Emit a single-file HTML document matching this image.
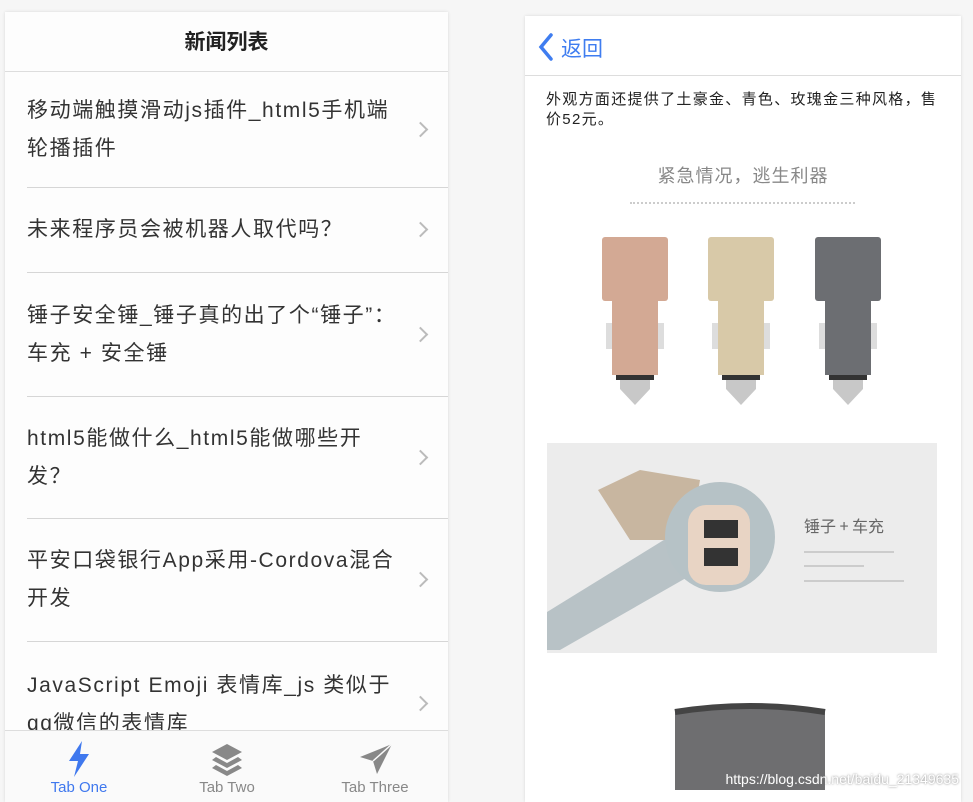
<!DOCTYPE html>
<html><head><meta charset="utf-8"><style>
*{margin:0;padding:0;box-sizing:border-box}
body{width:973px;height:802px;background:#f6f6f6;position:relative;overflow:hidden;font-family:"Liberation Sans","Noto Sans CJK SC",sans-serif}
.p{position:absolute;background:#fff;box-shadow:0 0 3px rgba(0,0,0,.12)}
#L{left:5px;top:12px;width:443px;height:790px;background:#fdfdfd}
#R{left:525px;top:16px;width:436px;height:786px}
.hd{height:60px;border-bottom:1px solid #ddd;text-align:center;font-size:21px;font-weight:bold;line-height:62px;color:#222}
.row{position:absolute;left:22px;right:0;border-bottom:1.5px solid #d6d6d6;font-size:21px;color:#333;line-height:38px;display:flex;align-items:center}
.row span{display:block;white-space:nowrap;letter-spacing:1.6px}
.ch{position:absolute;right:22px;top:50%;margin-top:-6px;width:11px;height:11px;border-right:2px solid #bbb;border-top:2px solid #bbb;transform:rotate(45deg)}
.tab{position:absolute;left:0;right:0;top:718px;height:72px;border-top:1px solid #ddd;background:#fafafa}
.t{position:absolute;top:48px;font-size:15px;color:#888;width:100px;text-align:center}
</style></head><body>
<div class="p" id="L">
<div class="hd">新闻列表</div>
<div style="position:absolute;left:0;right:0;top:61px;height:657px;overflow:hidden">
<div class="row" style="top:0;height:115px"><span>移动端触摸滑动js插件_html5手机端<br>轮播插件</span><i class="ch"></i></div>
<div class="row" style="top:115px;height:85px"><span>未来程序员会被机器人取代吗？</span><i class="ch"></i></div>
<div class="row" style="top:200px;height:124px"><span>锤子安全锤_锤子真的出了个“锤子”：<br>车充 + 安全锤</span><i class="ch"></i></div>
<div class="row" style="top:324px;height:122px"><span>html5能做什么_html5能做哪些开<br>发？</span><i class="ch"></i></div>
<div class="row" style="top:446px;height:123px"><span>平安口袋银行App采用-Cordova混合<br>开发</span><i class="ch"></i></div>
<div class="row" style="top:569px;height:123px;border:none;align-items:flex-start;padding-top:25px"><span>JavaScript Emoji 表情库_js 类似于<br>qq微信的表情库</span><i class="ch"></i></div>
</div>
<div class="tab">
<svg style="position:absolute;left:62px;top:10px" width="24" height="36" viewBox="0 0 24 36"><path d="M15 0 L2 20 H11 L7 36 L22 13 H13 Z" fill="#3f78ee"/></svg>
<svg style="position:absolute;left:205px;top:12px" width="34" height="34" viewBox="0 0 34 34"><path d="M17 1 L32 9 L17 17 L2 9Z" fill="#888"/><path d="M6 14 L17 20 L28 14 L32 17 L17 25 L2 17Z" fill="#888"/><path d="M6 22 L17 28 L28 22 L32 25 L17 33 L2 25Z" fill="#888"/></svg>
<svg style="position:absolute;left:354px;top:12px" width="34" height="32" viewBox="0 0 34 32"><path d="M33 1 L1 14 L14 18 L18 31 Z" fill="#888"/><path d="M33 1 L14 18" stroke="#fafafa" stroke-width="1.5"/></svg>
<div class="t" style="left:24px;color:#3f78ee">Tab One</div>
<div class="t" style="left:172px">Tab Two</div>
<div class="t" style="left:320px">Tab Three</div>
</div>
</div>
<div class="p" id="R">
<div style="height:60px;border-bottom:1px solid #ddd;position:relative">
<svg style="position:absolute;left:13px;top:17px" width="16" height="28" viewBox="0 0 16 28"><path d="M13 2 L3 14 L13 26" stroke="#3f7df0" stroke-width="3.5" fill="none" stroke-linecap="round"/></svg>
<div style="position:absolute;left:36px;top:17px;font-size:21px;color:#3f7df0">返回</div>
</div>
<div style="position:absolute;left:21px;top:74px;width:415px;font-size:15px;line-height:20px;color:#222;white-space:nowrap;letter-spacing:1.3px">外观方面还提供了土豪金、青色、玫瑰金三种风格，售<br>价52元。</div>
<div style="position:absolute;left:0;width:436px;top:146px;text-align:center;font-size:18px;color:#888;letter-spacing:1px">紧急情况，逃生利器</div>
<div style="position:absolute;left:105px;top:186px;width:225px;height:1px;border-top:2px dotted #ccc"></div>
<svg style="position:absolute;left:0;top:0" width="436" height="786" viewBox="525 16 436 786">
<defs>
<g id="c"><rect x="0" y="0" width="66" height="64" rx="3"/><path d="M10 64 H56 V138 H10Z"/><rect x="4" y="86" width="6" height="26" fill="#ddd"/><rect x="56" y="86" width="6" height="26" fill="#ddd"/><rect x="14" y="138" width="38" height="5" fill="#333"/><path d="M18 143 H48 V152 L33 168 L18 152Z" fill="#c8c8c8"/></g>
</defs>
<use href="#c" x="602" y="237" fill="#d3a994"/>
<use href="#c" x="708" y="237" fill="#d8c9a8"/>
<use href="#c" x="815" y="237" fill="#6c6e72"/>
<rect x="547" y="443" width="390" height="210" fill="#ececec"/>
<path d="M547 612 L680 530 L700 570 L560 650 L547 650Z" fill="#b8c2c6"/>
<path d="M598 490 L640 470 L700 480 L690 540 L630 540Z" fill="#c8b6a0"/>
<circle cx="720" cy="537" r="55" fill="#b6c2c6"/>
<rect x="688" y="505" width="62" height="80" rx="18" fill="#e8d4c4"/>
<rect x="704" y="520" width="34" height="18" fill="#333"/><rect x="704" y="548" width="34" height="18" fill="#333"/>
<text x="804" y="532" font-size="16" fill="#666" font-family="Noto Sans CJK SC">锤子 + 车充</text>
<rect x="804" y="551" width="90" height="2" fill="#ccc"/><rect x="804" y="565" width="60" height="2" fill="#ccc"/><rect x="804" y="580" width="100" height="2" fill="#ccc"/>
<path d="M675 712 Q750 695 825 712 V790 H675Z" fill="#6e6e70"/>
<path d="M675 712 Q750 700 825 712" stroke="#444" stroke-width="6" fill="none"/>
</svg>
<div style="position:absolute;right:2px;top:755px;font-size:14px;color:#fff;text-shadow:0 0 2px #777">https://blog.csdn.net/baidu_21349635</div>
</div>
</body></html>
